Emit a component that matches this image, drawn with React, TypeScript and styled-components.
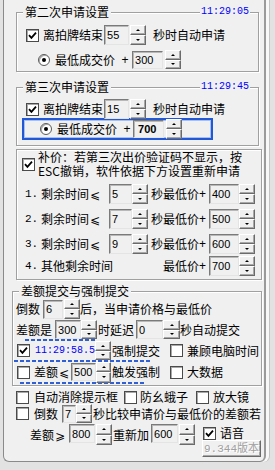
import React from 'react';
import styled, { createGlobalStyle } from 'styled-components';

const GlobalStyle = createGlobalStyle`
  html, body { margin: 0; padding: 0; }
  body {
    width: 275px;
    height: 470px;
    overflow: hidden;
    background: #e2e2e2;
    font-family: "Noto Sans CJK SC", "DejaVu Sans", sans-serif;
    font-size: 12px;
    color: #000;
  }
  * { box-sizing: border-box; }
`;

const Window = styled.div`
  width: 263px;
  height: 462px;
  margin-left: 3px;
  background: #f0f0f0;
  border-left: 1px solid #8a8a8a;
  border-right: 2px solid #9a9a9a;
  border-bottom: 1px solid #8a8a8a;
  border-bottom-left-radius: 6px;
  border-bottom-right-radius: 6px;
  box-shadow: 3px 0 0 #f8f8f8, 4px 0 0 #c4c4c4;
  overflow: hidden;
`;

const Group = styled.div<{ $ml: number; $w: number; $mt: number; $pt: number; $pb: number; $pl?: number }>`
  position: relative;
  margin: ${p => p.$mt}px 0 0 ${p => p.$ml}px;
  width: ${p => p.$w}px;
  padding: ${p => p.$pt}px 0 ${p => p.$pb}px ${p => p.$pl ?? 0}px;
  border: 1px solid #a0a0a0;
  box-shadow: inset 1px 1px 0 #fff, 1px 1px 0 #fff;
`;

const Caption = styled.span`
  position: absolute;
  top: -8px;
  left: 6px;
  padding: 0 2px;
  background: #f0f0f0;
  line-height: 14px;
  white-space: nowrap;
`;

const Clock = styled.span`
  position: absolute;
  top: -7px;
  right: 8px;
  padding: 0 1px;
  background: #f0f0f0;
  color: #0000ff;
  font-family: "Liberation Mono", monospace;
  font-size: 10px;
  line-height: 12px;
`;

const Row = styled.div<{ $h: number; $mt?: number; $pl?: number; $pr?: number; $align?: string; $between?: boolean }>`
  display: flex;
  align-items: ${p => p.$align ?? 'center'};
  justify-content: ${p => (p.$between ? 'space-between' : 'flex-start')};
  height: ${p => p.$h}px;
  margin-top: ${p => p.$mt ?? 0}px;
  padding-left: ${p => p.$pl ?? 0}px;
  padding-right: ${p => p.$pr ?? 0}px;
  white-space: nowrap;
`;

const Cluster = styled.div`
  display: flex;
  align-items: center;
`;

const Txt = styled.span<{ $ml?: number; $lh?: number }>`
  flex-shrink: 0;
  margin-left: ${p => p.$ml ?? 0}px;
  line-height: ${p => p.$lh ?? 14}px;
`;

const Rel = styled.span`
  display: inline-block;
  width: 12px;
  text-align: center;
`;

const Plus = styled.span<{ $w?: number; $ml?: number }>`
  display: inline-block;
  flex-shrink: 0;
  width: ${p => p.$w ?? 8}px;
  margin-left: ${p => p.$ml ?? 0}px;
  text-align: center;
  font-family: "Liberation Sans", sans-serif;
  line-height: 14px;
`;

const Index = styled.span`
  display: inline-block;
  width: 16px;
  font-family: "Liberation Mono", monospace;
  font-size: 11px;
`;

const BlueTime = styled.span<{ $ml?: number }>`
  flex-shrink: 0;
  width: 60px;
  margin-left: ${p => p.$ml ?? 0}px;
  color: #0000ff;
  font-family: "Liberation Mono", monospace;
  font-size: 10px;
`;

const NumBox = styled.div<{ $w: number; $h: number; $ml?: number; $bold?: boolean; $pl?: number }>`
  flex-shrink: 0;
  display: flex;
  align-items: center;
  width: ${p => p.$w}px;
  height: ${p => p.$h}px;
  margin-left: ${p => p.$ml ?? 0}px;
  padding-left: ${p => p.$pl ?? 2}px;
  background: #f0f0f0;
  border: 1px solid;
  border-color: #7a7a7a #e4e4e4 #e4e4e4 #7a7a7a;
  box-shadow: inset 1px 1px 0 #b8b8b8;
  font-family: "Liberation Sans", Arial, sans-serif;
  font-size: 11px;
  font-weight: ${p => (p.$bold ? 700 : 400)};
  overflow: hidden;
`;

const SpinWrap = styled.div<{ $w: number; $h: number; $ml?: number }>`
  flex-shrink: 0;
  display: flex;
  flex-direction: column;
  width: ${p => p.$w}px;
  height: ${p => p.$h}px;
  margin-left: ${p => p.$ml ?? 0}px;
`;

const SpinBtn = styled.div<{ $up?: boolean }>`
  flex: 1;
  display: flex;
  align-items: center;
  justify-content: center;
  background: #f0f0f0;
  border: 1px solid;
  border-color: #fff #6a6a6a #6a6a6a #fff;
  box-shadow: inset -1px -1px 0 #a8a8a8;

  &::after {
    content: '';
    width: 0;
    height: 0;
    border-left: 2px solid transparent;
    border-right: 2px solid transparent;
    ${p => (p.$up ? 'border-bottom: 2px solid #000;' : 'border-top: 2px solid #000;')}
  }
`;

const Box = styled.span<{ $ml?: number }>`
  flex-shrink: 0;
  display: inline-flex;
  align-items: center;
  justify-content: center;
  width: 13px;
  height: 13px;
  margin-left: ${p => p.$ml ?? 0}px;
  background: #fff;
  border: 1px solid #4a4a4a;
  box-shadow: inset 1px 1px 0 #a8a8a8;
`;

const Radio = styled.span<{ $ml?: number }>`
  flex-shrink: 0;
  display: inline-flex;
  align-items: center;
  justify-content: center;
  width: 12px;
  height: 12px;
  margin-left: ${p => p.$ml ?? 0}px;
  border-radius: 50%;
  background: #fff;
  border: 1px solid #5a5a5a;
  box-shadow: inset 1px 1px 0 #aaa;

  &::after {
    content: '';
    width: 4px;
    height: 4px;
    border-radius: 50%;
    background: #000;
  }
`;

const BlueFrame = styled.div`
  display: flex;
  align-items: center;
  width: 191px;
  height: 22px;
  margin: -1px 0 0 -4px;
  padding-left: 16px;
  border: 2px solid #2158d8;
  box-shadow: inset 0 0 0 1px #a8c0ee;
`;

const NoteText = styled.div`
  margin-left: 3px;
  line-height: 14px;
  white-space: nowrap;
`;

const Dash = styled.div<{ $ml: number; $w: number }>`
  width: ${p => p.$w}px;
  height: 2px;
  margin-left: ${p => p.$ml}px;
  background: repeating-linear-gradient(90deg, #2f5fd4 0 4px, transparent 4px 6px);
`;

const Bottom = styled.div`
  padding-left: 12px;
`;

const Column = styled.div<{ $ml?: number }>`
  display: flex;
  flex-direction: column;
  margin-left: ${p => p.$ml ?? 0}px;
`;

const VersionButton = styled.div`
  display: flex;
  align-items: center;
  justify-content: center;
  width: 59px;
  height: 17px;
  background: #f0f0f0;
  border: 1px solid;
  border-color: #fff #6a6a6a #6a6a6a #fff;
  box-shadow: inset -1px -1px 0 #a8a8a8;
  color: #a0a0a0;
  text-shadow: 1px 1px 0 #fff;
  font-family: "Liberation Mono", "Noto Sans CJK SC", monospace;
  font-size: 11px;
  line-height: 14px;
`;

const Spin = ({ w = 16, h = 20, ml = 0 }: { w?: number; h?: number; ml?: number }) => (
  <SpinWrap $w={w} $h={h} $ml={ml}>
    <SpinBtn $up />
    <SpinBtn />
  </SpinWrap>
);

const Check = ({ on = false, ml = 0 }: { on?: boolean; ml?: number }) => (
  <Box $ml={ml}>
    {on && (
      <svg width="9" height="9" viewBox="0 0 9 9">
        <polyline points="1,4.2 3.4,6.8 8,1.6" fill="none" stroke="#000" strokeWidth="1.8" />
      </svg>
    )}
  </Box>
);

const listRows = [
  { n: '1.', sec: '5', price: '400' },
  { n: '2.', sec: '7', price: '500' },
  { n: '3.', sec: '9', price: '600' },
];

export default function App() {
  return (
    <>
      <GlobalStyle />
      <Window>
        <Group $ml={12} $w={243} $mt={12} $pt={12} $pb={2} $pl={9}>
          <Caption>第二次申请设置</Caption>
          <Clock>11:29:05</Clock>
          <Row $h={20}>
            <Check on />
            <Txt $ml={4}>离拍牌结束</Txt>
            <NumBox $w={25} $h={20} $ml={1}>55</NumBox>
            <Spin ml={1} />
            <Txt $ml={7}>秒时自动申请</Txt>
          </Row>
          <Row $h={19} $mt={5}>
            <Radio $ml={12} />
            <Txt $ml={5}>最低成交价</Txt>
            <Plus $ml={6}>+</Plus>
            <NumBox $w={31} $h={18} $ml={3}>300</NumBox>
            <Spin h={19} ml={2} />
          </Row>
        </Group>

        <Group $ml={12} $w={243} $mt={15} $pt={11} $pb={5} $pl={9}>
          <Caption>第三次申请设置</Caption>
          <Clock>11:29:45</Clock>
          <Row $h={20}>
            <Check on />
            <Txt $ml={4}>离拍牌结束</Txt>
            <NumBox $w={25} $h={20} $ml={1}>15</NumBox>
            <Spin ml={1} />
            <Txt $ml={7}>秒时自动申请</Txt>
          </Row>
          <BlueFrame>
            <Radio />
            <Txt $ml={5}>最低成交价</Txt>
            <Plus $ml={6}>+</Plus>
            <NumBox $w={31} $h={18} $ml={2} $pl={4} $bold>700</NumBox>
            <Spin h={20} ml={2} />
          </BlueFrame>
        </Group>

        <Group $ml={12} $w={246} $mt={3} $pt={0} $pb={3} $pl={5}>
          <Row $h={28}>
            <Check on />
            <NoteText>
              补价：若第三次出价验证码不显示，按
              <br />
              ESC撤销，软件依据下方设置重新申请
            </NoteText>
          </Row>
          {listRows.map((r, i) => (
            <Row key={r.n} $h={20} $mt={i === 0 ? 6 : 5} $pl={3} $pr={6} $between>
              <Cluster>
                <Index>{r.n}</Index>
                <Txt>剩余时间<Rel>⩽</Rel></Txt>
                <NumBox $w={23} $h={20} $ml={8}>{r.sec}</NumBox>
                <Spin />
              </Cluster>
              <Cluster>
                <Txt>秒最低价</Txt>
                <Plus $w={7}>+</Plus>
                <NumBox $w={30} $h={20} $ml={3}>{r.price}</NumBox>
                <Spin />
              </Cluster>
            </Row>
          ))}
          <Row $h={20} $mt={2} $pl={3} $pr={6} $between>
            <Cluster>
              <Index>4.</Index>
              <Txt>其他剩余时间</Txt>
            </Cluster>
            <Cluster>
              <Txt>最低价</Txt>
              <Plus $w={7}>+</Plus>
              <NumBox $w={30} $h={20} $ml={3}>700</NumBox>
              <Spin />
            </Cluster>
          </Row>
        </Group>

        <Group $ml={8} $w={250} $mt={11} $pt={7} $pb={1} $pl={3}>
          <Caption>差额提交与强制提交</Caption>
          <Row $h={20}>
            <Txt>倒数</Txt>
            <NumBox $w={20} $h={19} $ml={3}>6</NumBox>
            <Spin ml={1} />
            <Txt>后，当申请价格与最低价</Txt>
          </Row>
          <Row $h={19} $mt={1}>
            <Txt>差额是</Txt>
            <NumBox $w={26} $h={19} $ml={3}>300</NumBox>
            <Spin h={19} />
            <Txt $ml={1}>时延迟</Txt>
            <NumBox $w={27} $h={19} $ml={2}>0</NumBox>
            <Spin w={17} h={19} />
            <Txt>秒自动提交</Txt>
          </Row>
          <Dash $ml={9} $w={72} />
          <Row $h={19}>
            <Check on ml={1} />
            <BlueTime $ml={5}>11:29:58.5</BlueTime>
            <Spin h={19} />
            <Txt $ml={1}>强制提交</Txt>
            <Check ml={10} />
            <Txt $ml={4}>兼顾电脑时间</Txt>
          </Row>
          <Dash $ml={-2} $w={136} />
          <Row $h={20}>
            <Check ml={1} />
            <Txt $ml={4}>差额<Rel>⩽</Rel></Txt>
            <NumBox $w={25} $h={18} $ml={1}>500</NumBox>
            <Spin w={15} h={21} />
            <Txt $ml={1}>触发强制</Txt>
            <Check ml={10} />
            <Txt $ml={4}>大数据</Txt>
          </Row>
          <Dash $ml={4} $w={126} />
        </Group>

        <Bottom>
          <Row $h={14} $mt={4}>
            <Check />
            <Txt $ml={5}>自动消除提示框</Txt>
            <Check ml={6} />
            <Txt $ml={3}>防幺蛾子</Txt>
            <Check ml={8} />
            <Txt $ml={4}>放大镜</Txt>
          </Row>
          <Row $h={19}>
            <Check />
            <Txt $ml={5}>倒数</Txt>
            <NumBox $w={14} $h={18} $ml={4}>7</NumBox>
            <Spin h={19} />
            <Txt $ml={1}>秒比较申请价与最低价的差额若</Txt>
          </Row>
          <Row $h={33} $mt={1} $align="flex-start">
            <Txt $ml={14} $lh={21}>差额<Rel>⩾</Rel></Txt>
            <NumBox $w={26} $h={19} $ml={3}>800</NumBox>
            <Spin h={21} ml={1} />
            <Txt $ml={1} $lh={21}>重新加</Txt>
            <NumBox $w={27} $h={19} $ml={2}>600</NumBox>
            <Spin h={21} ml={1} />
            <Column $ml={7}>
              <Row $h={14} $mt={2} $pl={1}>
                <Check on />
                <Txt $ml={4}>语音</Txt>
              </Row>
              <VersionButton>9.344版本</VersionButton>
            </Column>
          </Row>
        </Bottom>
      </Window>
    </>
  );
}
